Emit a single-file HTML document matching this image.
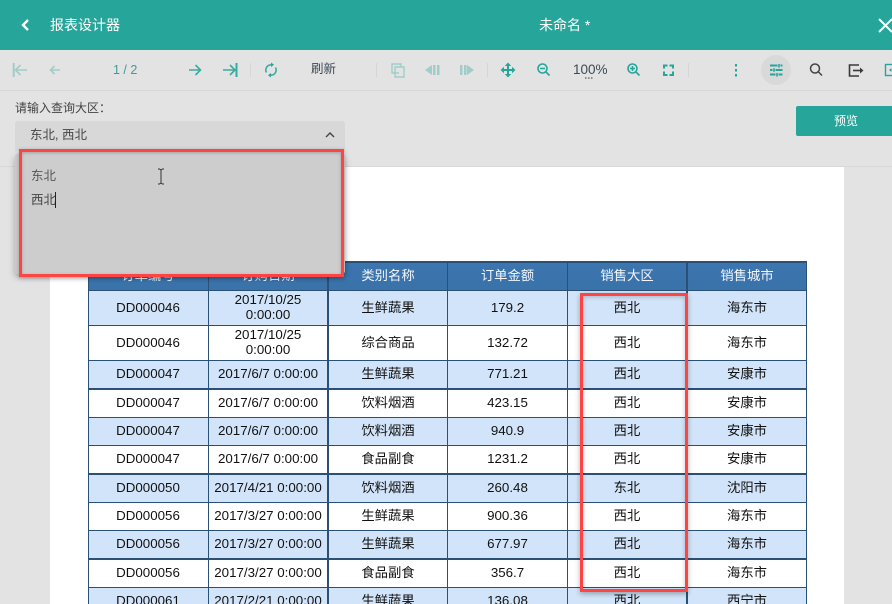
<!DOCTYPE html>
<html lang="zh"><head><meta charset="utf-8"><style>
html,body{margin:0;padding:0}
body{width:892px;height:604px;overflow:hidden;position:relative;background:#e3e3e3;font-family:"Liberation Sans","Noto Sans CJK SC",sans-serif;color:#000}
div,span{box-sizing:border-box}
.a{position:absolute;white-space:nowrap}
#hd{left:0;top:0;width:892px;height:50px;background:#26a69a}
.t{font-size:13px;line-height:16px;color:#3b4a55}
#page{left:50px;top:167px;width:794px;height:437px;background:#fff}
.r{position:absolute;left:88px;width:719px;font-size:13.33px}
.r span{position:absolute;top:-1px;bottom:1px;display:flex;align-items:center;justify-content:center;text-align:center;line-height:15px;color:#111}
.r.h span{top:0;bottom:0}
.r span:nth-child(1){left:0;width:120px}
.r span:nth-child(2){left:120px;width:120px}
.r span:nth-child(3){left:240px;width:120px}
.r span:nth-child(4){left:360px;width:119px}
.r span:nth-child(5){left:479px;width:120px}
.r span:nth-child(6){left:599px;width:120px}
.b{background:#d2e4f9}.w{background:#fff}
.h{background:linear-gradient(#3c76b0,#3a72a9)}
.h span{color:#f2f6fa!important}
.v{position:absolute;top:261px;height:343px;background:#2b5078}
.l{position:absolute;left:88px;width:719px;background:#2b5078}
</style></head><body>
<div class="a" id="hd"></div>
<div class="a" style="left:50px;top:17px;font-size:14px;line-height:16px;color:#fff">报表设计器</div>
<div class="a" style="left:539px;top:17px;font-size:14px;line-height:16px;color:#fff">未命名 *</div>

<div class="a" style="left:0;top:90px;width:892px;height:1px;background:#d8d8d8"></div>
<div class="a" style="left:0;top:166px;width:892px;height:1px;background:#d8d8d8"></div>
<div class="a" id="page"></div>

<div class="a t" style="left:113px;top:62px;color:#3f9c94;font-size:12.5px">1 / 2</div>
<div class="a t" style="left:311px;top:61px;font-size:12.5px">刷新</div>
<div class="a t" style="left:573px;top:62px;font-size:13.5px">100%</div>
<div class="a" style="left:15px;top:100px;font-size:12px;line-height:16px;color:#444">请输入查询大区：</div>
<div class="a" style="left:796px;top:106px;width:96px;height:30px;background:#26a69a;border-radius:2px 0 0 2px;color:#fff;font-size:12px;line-height:30px;padding-left:38px">预览</div>

<div class="r h" style="top:261px;height:29px"><span>订单编号</span><span>订购日期</span><span>类别名称</span><span>订单金额</span><span>销售大区</span><span>销售城市</span></div>
<div class="r b" style="top:291px;height:34px"><span>DD000046</span><span>2017/10/25<br>0:00:00</span><span>生鲜蔬果</span><span>179.2</span><span>西北</span><span>海东市</span></div>
<div class="r w" style="top:326px;height:34px"><span>DD000046</span><span>2017/10/25<br>0:00:00</span><span>综合商品</span><span>132.72</span><span>西北</span><span>海东市</span></div>
<div class="r b" style="top:361px;height:27px"><span>DD000047</span><span>2017/6/7 0:00:00</span><span>生鲜蔬果</span><span>771.21</span><span>西北</span><span>安康市</span></div>
<div class="r w" style="top:390px;height:27px"><span>DD000047</span><span>2017/6/7 0:00:00</span><span>饮料烟酒</span><span>423.15</span><span>西北</span><span>安康市</span></div>
<div class="r b" style="top:418px;height:27px"><span>DD000047</span><span>2017/6/7 0:00:00</span><span>饮料烟酒</span><span>940.9</span><span>西北</span><span>安康市</span></div>
<div class="r w" style="top:446px;height:27px"><span>DD000047</span><span>2017/6/7 0:00:00</span><span>食品副食</span><span>1231.2</span><span>西北</span><span>安康市</span></div>
<div class="r b" style="top:475px;height:27px"><span>DD000050</span><span>2017/4/21 0:00:00</span><span>饮料烟酒</span><span>260.48</span><span>东北</span><span>沈阳市</span></div>
<div class="r w" style="top:503px;height:27px"><span>DD000056</span><span>2017/3/27 0:00:00</span><span>生鲜蔬果</span><span>900.36</span><span>西北</span><span>海东市</span></div>
<div class="r b" style="top:531px;height:27px"><span>DD000056</span><span>2017/3/27 0:00:00</span><span>生鲜蔬果</span><span>677.97</span><span>西北</span><span>海东市</span></div>
<div class="r w" style="top:560px;height:27px"><span>DD000056</span><span>2017/3/27 0:00:00</span><span>食品副食</span><span>356.7</span><span>西北</span><span>海东市</span></div>
<div class="r b" style="top:588px;height:16px;overflow:hidden"><span style="bottom:auto;height:27px">DD000061</span><span style="bottom:auto;height:27px">2017/2/21 0:00:00</span><span style="bottom:auto;height:27px">生鲜蔬果</span><span style="bottom:auto;height:27px">136.08</span><span style="bottom:auto;height:27px">西北</span><span style="bottom:auto;height:27px">西宁市</span></div>

<div class="l" style="top:261px;height:2px"></div>
<div class="l" style="top:290px;height:1px"></div>
<div class="l" style="top:325px;height:1px"></div>
<div class="l" style="top:360px;height:1px"></div>
<div class="l" style="top:388px;height:2px"></div>
<div class="l" style="top:417px;height:1px"></div>
<div class="l" style="top:445px;height:1px"></div>
<div class="l" style="top:473px;height:2px"></div>
<div class="l" style="top:502px;height:1px"></div>
<div class="l" style="top:530px;height:1px"></div>
<div class="l" style="top:558px;height:2px"></div>
<div class="l" style="top:587px;height:1px"></div>
<div class="v" style="left:88px;width:1px"></div>
<div class="v" style="left:208px;width:1px"></div>
<div class="v" style="left:327px;width:2px"></div>
<div class="v" style="left:447px;width:1px"></div>
<div class="v" style="left:567px;width:1px"></div>
<div class="v" style="left:686px;width:2px"></div>
<div class="v" style="left:806px;width:1px"></div>

<div class="a" style="left:580px;top:293px;width:108px;height:299px;border:3px solid #ff4444;box-shadow:0 2px 5px rgba(0,0,0,.3),inset 0 1px 5px rgba(0,0,0,.22)"></div>

<div class="a" style="left:15px;top:121px;width:330px;height:30px;background:#d8d8d8;border-radius:3px 3px 0 0;font-size:12.5px;line-height:29px;padding-left:15px;color:#444">东北, 西北</div>
<div class="a" style="left:15px;top:154px;width:330px;height:120px;background:#cdcdcd;border-radius:3px;box-shadow:0 3px 7px rgba(0,0,0,.28)"></div>
<div class="a" style="left:19px;top:149px;width:325px;height:128px;border:3px solid #ff4444;background:#cdcdcd;box-shadow:0 1px 4px rgba(0,0,0,.25),inset 0 1px 3px rgba(0,0,0,.22)"></div>
<div class="a" style="left:31px;top:168px;font-size:12.5px;line-height:16px;color:#555">东北</div>
<div class="a" style="left:31px;top:192px;font-size:12.5px;line-height:16px;color:#444">西北</div>
<div class="a" style="left:55px;top:192px;width:1px;height:16px;background:#222"></div>

<svg class="a" style="left:0;top:0" width="892" height="604" viewBox="0 0 892 604" fill="none">
<path d="M28 20l-5 5 5 5" stroke="#fff" stroke-width="2.4"/>
<path d="M879 19l13 13M892 19l-13 13" stroke="#fff" stroke-width="2"/>
<g stroke="#26a69a" stroke-width="1.6" opacity=".35">
<path d="M13.700 63v14" stroke-width="2"/><path d="M15 70h12M20.500 65l-5 5 5 5"/>
<path d="M50 70h10M54.500 66l-4 4 4 4"/>
</g>
<g stroke="#26a69a" stroke-width="1.6" opacity=".9">
<path d="M189 70h11M195.500 65l5 5-5 5"/>
<path d="M223 70h12M230 65l5 5-5 5"/><path d="M236.500 63v14" stroke-width="2"/>
<path d="M266.500 72.500a5.200 5.200 0 0 1 4.500-7.700M275.500 67.500a5.200 5.200 0 0 1-4.500 7.700"/>
</g>
<path d="M271 62.500v4.500l3-2.200zM271 77.500v-4.500l-3 2.200z" fill="#26a69a"/>
<g stroke="#d6d6d6"><path d="M250.500 63v14M376.500 63v14M487.500 63v14M688.500 63v14"/></g>
<g opacity=".35">
<path d="M399 73h-7v-9h9v3M395 67h9v10h-9z" stroke="#26a69a" stroke-width="1.400"/>
<path d="M432 65v10l-7-5z" fill="#26a69a"/><path d="M433 65h2.500v10H433zM437 65h2.500v10H437z" fill="#26a69a"/>
<path d="M467 65v10l7-5z" fill="#26a69a"/><path d="M460 65h2.500v10H460zM464 65h2.500v10H464z" fill="#26a69a"/>
</g>
<path d="M502 70h12M508 64v12" stroke="#26a69a" stroke-width="2"/>
<path d="M508 62.500l-3.200 3.500h6.400zM508 77.500l-3.200-3.500h6.400zM500.500 70l3.500-3.200v6.400zM515.500 70l-3.500-3.200v6.400z" fill="#26a69a"/>
<g stroke="#26a69a" stroke-width="1.600">
<circle cx="542.500" cy="68.500" r="4.500"/><path d="M546 72l3.500 3.500M540 68.500h5"/>
<circle cx="632.500" cy="68.500" r="4.500"/><path d="M636 72l3.500 3.500M630 68.500h5M632.500 66v5"/>
</g>
<path d="M664 68.500V65.500h3.500M669.500 65.500H673v3M673 71.500v3.500h-3.500M667.500 75H664v-3.500" stroke="#26a69a" stroke-width="2"/>
<path d="M585 78h1.500M588 78h1.500M591 78h1.500" stroke="#555" stroke-width="1.200"/>
<path d="M736 64v2.500M736 69v2.500M736 74v2.500" stroke="#26a69a" stroke-width="2"/>
<circle cx="776" cy="70" r="15" fill="#d9d9d9"/>
<path d="M770 65.500h7.500M780.500 65.500h2M770 70h2.500M775.500 70h7M770 74.500h5.500M778.500 74.500h4" stroke="#26a69a" stroke-width="2"/>
<path d="M779 64v3.500M774 68.300v3.500M777 73v3.500" stroke="#26a69a" stroke-width="1.600"/>
<circle cx="815" cy="68.500" r="4.500" stroke="#444" stroke-width="1.500"/>
<path d="M818.500 72l3.500 3.500" stroke="#444" stroke-width="1.500"/>
<path d="M859 65h-9.500v11H859" stroke="#3a3a3a" stroke-width="1.600"/>
<path d="M853 70.500h8" stroke="#3a3a3a" stroke-width="1.600"/><path d="M860 67.500l3.500 3-3.500 3z" fill="#3a3a3a"/>
<rect x="885.500" y="64.500" width="12" height="11" stroke="#26a69a" stroke-width="1.400"/>
<path d="M889 70l2.500-2v4z" fill="#26a69a"/>
<path d="M326 137l4-4 4 4" stroke="#444" stroke-width="1.400"/>
<path d="M158 169h1.500l1.500 1 1.500-1h1.500M161 170v13M158 184h1.500l1.500-1 1.500 1h1.500" stroke="#333" stroke-width="1"/>
</svg>
</body></html>
